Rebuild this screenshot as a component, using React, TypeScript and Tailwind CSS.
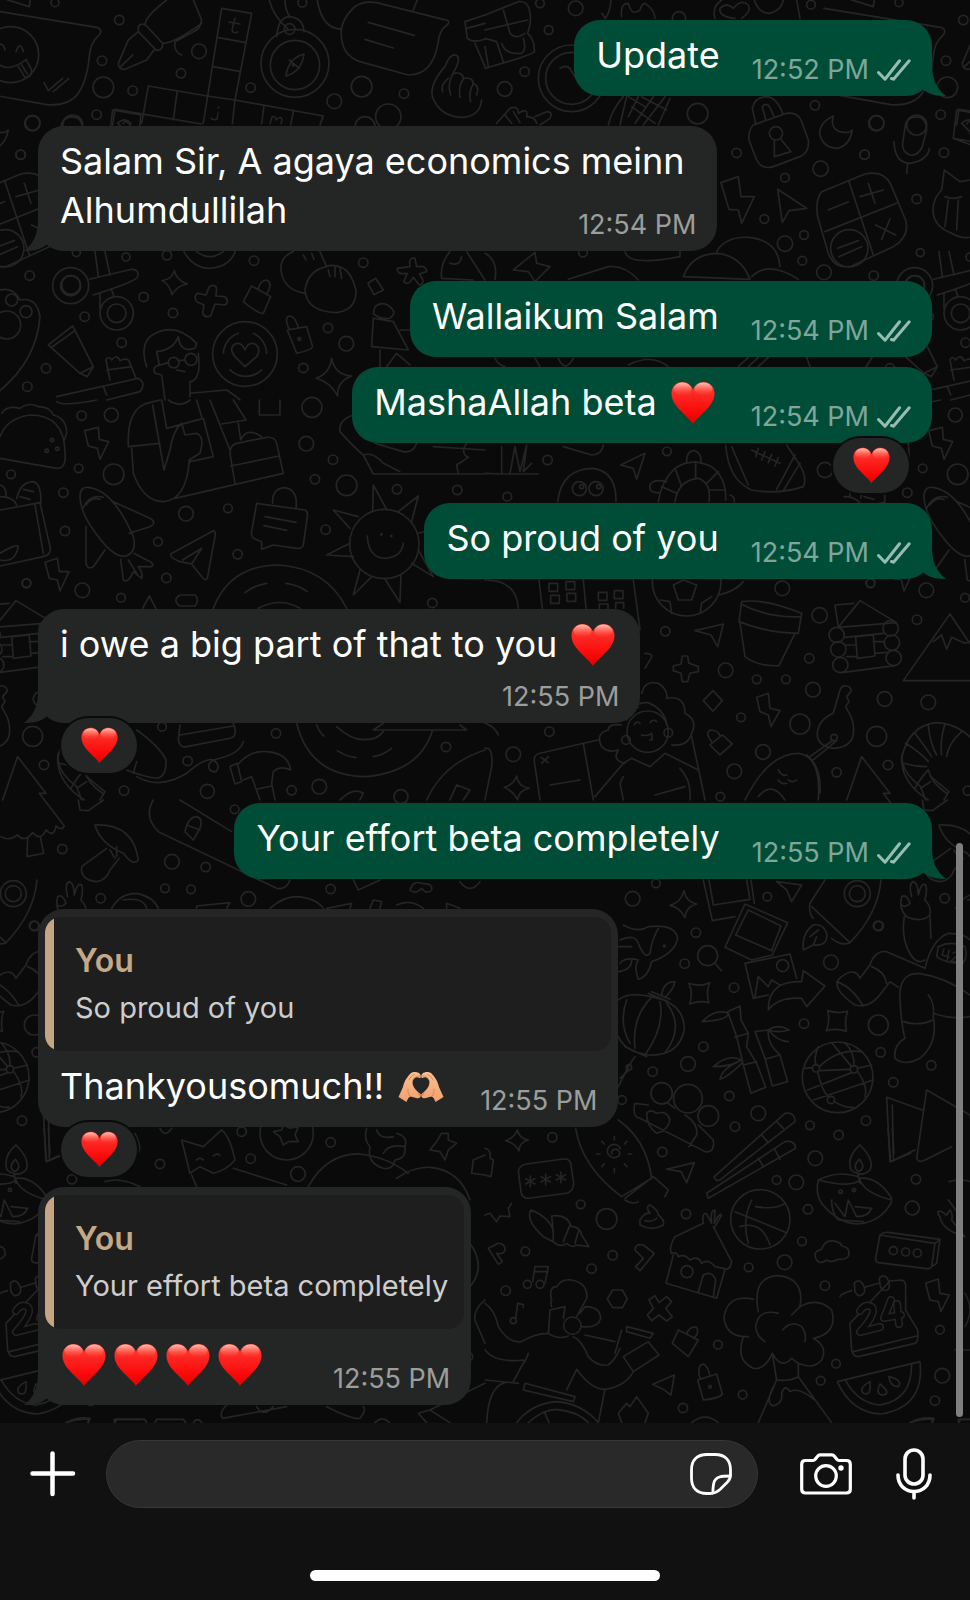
type Message = {
  id: number;
  mine: boolean;
  text: string;
  time: string;
  hearts?: number;
  hands?: boolean;
  quote?: string;
  reacted?: boolean;
  first?: boolean;
  tail?: boolean;
  stacked?: boolean;
};

// Lines of a longer message are split with \n, the last one shares its row with the time
const messages: Message[] = [
  { id: 1, mine: true, text: 'Update', time: '12:52 PM', tail: true },
  { id: 2, mine: false, text: 'Salam Sir, A agaya economics meinn\nAlhumdullilah', time: '12:54 PM', first: true, tail: true },
  { id: 3, mine: true, text: 'Wallaikum Salam', time: '12:54 PM', first: true },
  { id: 4, mine: true, text: 'MashaAllah beta', hearts: 1, time: '12:54 PM', reacted: true },
  { id: 5, mine: true, text: 'So proud of you', time: '12:54 PM', tail: true },
  { id: 6, mine: false, text: 'i owe a big part of that to you', hearts: 1, time: '12:55 PM', first: true, tail: true, reacted: true, stacked: true },
  { id: 7, mine: true, text: 'Your effort beta completely', time: '12:55 PM', first: true, tail: true },
  { id: 8, mine: false, text: 'Thankyousomuch!!', hands: true, quote: 'So proud of you', time: '12:55 PM', first: true, reacted: true },
  { id: 9, mine: false, text: '', hearts: 4, quote: 'Your effort beta completely', time: '12:55 PM', tail: true },
];

// Wallpaper doodles, drawn in patches at three times their final size
type Patch = { x: number; y: number; rings: number[][]; lines: string[] };

const patches: Patch[] = [
  {
    x: 0, y: 0,
    rings: [
      [165, 8, 12], [358, 60, 14], [597, 154, 22], [306, 182, 14], [543, 220, 14], [310, 262, 31], [398, 272, 14], [290, 344, 14],
      [98, 369, 22], [218, 375, 30], [62, 464, 14], [752, 263, 14], [907, 8, 13], [1085, 260, 31], [1212, 281, 14], [1003, 304, 22],
      [1165, 350, 38], [1095, 380, 30], [89, 827, 14], [229, 758, 12], [378, 771, 12], [431, 891, 14], [519, 939, 14], [254, 950, 14],
      [365, 1028, 14], [138, 1105, 14], [82, 1160, 14], [501, 766, 14], [762, 782, 14], [1090, 788, 14], [984, 984, 14], [1039, 1031, 22],
      [910, 1104, 14], [32, 164, 84], [885, 190, 102], [885, 195, 74], [869, 87, 16], [212, 857, 54], [212, 857, 30], [350, 940, 50],
      [350, 940, 28], [735, 1062, 97], [898, 1017, 4], [35, 900, 18], [78, 935, 18], [20, 975, 42], [521, 1088, 16], [573, 1078, 18], [880, 195, 3],
    ],
    lines: [
      'M-60 25 L0 35 L290 82 Q312 90 295 108 Q270 130 268 170 Q262 240 235 280 Q205 320 140 314 L-60 278',
      'M0 196 Q30 215 80 178 M-12 150 Q5 115 15 150 M48 155 Q60 120 70 155 M55 200 L75 232 Q95 235 95 210 L80 182 M65 195 L82 222',
      'M132 248 L145 272 L188 235 M160 275 L206 236',
      'M355 190 Q355 210 375 208 L440 180 L462 150 M355 190 L385 120 L415 95 M362 200 L398 165 M415 80 Q425 65 440 78 L488 130 Q490 150 470 152 L415 95 Z',
      'M436 72 Q435 50 500 0 M490 130 Q520 130 605 70 M580 0 L605 60 Q600 90 580 95 L525 125 Q520 155 545 165',
      'M665 25 L755 40 L705 300 L970 348 L960 375 M665 25 L610 370 M652 112 L738 128 M640 200 L722 215 M622 288 L705 300 M445 258 L622 288 M445 258 L425 370 M532 272 L520 360 M345 328 L605 372 M345 328 L338 375 M792 318 L785 372 M880 335 L872 375 M705 300 L697 372',
      'M830 110 Q835 50 870 50 Q910 55 912 95 M808 0 Q820 50 865 88 M855 0 Q855 30 870 50 M912 162 Q865 175 858 228 Q905 215 912 162 Z M868 180 L898 205',
      'M1050 35 Q1075 0 1130 8 L1330 58 Q1360 62 1335 80 Q1318 95 1315 125 Q1300 225 1225 225 L1080 185 Q1020 165 1024 90 Q1028 60 1050 35 Z M1105 67 L1243 106 M1095 118 L1180 144 M952 0 Q965 85 1025 88 M1240 30 L1252 0',
      'M1395 65 L1455 45 M1395 65 L1402 115 Q1420 130 1455 118 M1425 130 L1455 200 M1400 85 L1455 70',
      'M1362 215 Q1385 175 1368 165 Q1350 160 1335 200 Q1290 250 1297 290 Q1320 350 1385 352 Q1440 350 1445 300 M1345 235 Q1320 255 1328 275 M1362 215 Q1340 250 1352 285 M1362 220 Q1390 215 1390 238 Q1375 255 1380 292 M1390 235 Q1420 230 1420 252 Q1405 275 1412 305 M1420 250 Q1440 260 1430 285',
      'M268 838 L395 808 Q420 808 412 832 Q405 845 280 885 M285 755 L295 830 M315 755 L330 825 M300 880 L300 925 M335 870 L342 890',
      'M523 812 Q530 842 562 852 Q530 858 516 884 Q510 855 486 842 Q515 840 523 812 Z',
      'M628 860 Q645 850 650 865 L648 888 L675 890 Q690 905 675 915 L645 912 L632 948 Q615 955 608 940 L612 915 L590 905 Q580 890 592 880 L618 885 Z',
      'M755 858 L812 890 L790 940 Q780 945 730 905 Z M775 868 Q780 840 800 840 Q820 850 800 882',
      'M862 990 L920 980 L938 1040 Q935 1050 890 1060 Z M868 988 Q850 950 870 948 Q885 950 895 982',
      'M552 755 Q580 805 630 805 Q690 800 705 755 M590 755 Q630 785 670 755',
      'M880 755 Q840 770 843 810 Q850 870 915 880 M960 755 L980 800 Q925 810 915 870 Q920 935 1010 938 Q1070 930 1068 870 Q1055 820 1030 805 Q1000 790 980 800 M985 810 L990 830 M1005 800 L1005 830 M1020 805 L1025 835 M910 765 L918 780 M935 760 L942 778',
      'M1127 835 L1150 870 L1122 884 L1104 850 Z',
      'M1230 800 Q1225 770 1245 775 L1250 800 Q1280 795 1280 815 L1258 822 Q1280 850 1258 855 L1240 832 Q1225 860 1212 845 L1222 820 Q1190 825 1192 805 Z',
      'M1350 755 Q1320 790 1325 835 L1420 840 M1350 790 Q1380 800 1385 770 M1400 755 L1455 840',
      'M670 1060 A68 68 0 0 1 715 1000 M760 1000 A68 68 0 0 1 800 1060 M690 1110 A68 68 0 0 0 785 1110 M735 1100 L705 1070 Q685 1045 705 1032 Q725 1025 735 1050 Q745 1025 765 1032 Q785 1045 770 1070 Z',
      'M440 1100 Q420 1040 450 1010 Q520 960 590 1030 L585 1045 Q540 1060 535 1010 Q520 1050 470 1055 L478 1095 Q455 1100 465 1120 L485 1125 L495 1200 M595 1060 Q605 1140 570 1145 L570 1190 M535 1082 L555 1080 M530 1110 L555 1115 M505 1088 L470 1098 M570 1180 L680 1170 Q710 1190 720 1200',
      'M145 1035 L218 978 L280 1100 L240 1120 Z M155 1042 L225 992 M240 1120 L262 1130 L280 1100',
      'M330 1140 L318 1080 Q325 1065 335 1080 Q350 1060 360 1082 Q385 1070 390 1090 L408 1135 M170 1190 L415 1135 Q440 1150 420 1175 L320 1200 M320 1110 L395 1100 M310 1160 L320 1185',
      'M995 1075 Q1005 1125 1055 1128 Q1010 1145 1013 1188 Q990 1145 948 1135 Q990 1120 995 1075 Z',
      'M1120 955 L1115 1040 L1225 1050 L1180 965 Z M1125 920 Q1150 900 1175 925 Q1190 940 1170 955 Q1140 960 1120 940 Z M1140 1050 L1140 1100 M1160 1100 L1190 1060 L1230 1095 M1200 990 L1230 990',
      'M0 870 Q40 860 60 900 Q110 890 120 950 Q110 1080 0 1172',
    ],
  },
  {
    x: 485, y: 0,
    rings: [
      [165, 10, 13], [272, 25, 22], [191, 90, 13], [119, 215, 14], [59, 267, 22], [582, 55, 20], [978, 14, 13], [638, 341, 31],
      [990, 316, 14], [1174, 370, 23], [755, 459, 14], [1139, 464, 14], [1007, 506, 23], [900, 533, 13], [838, 657, 13], [957, 705, 13],
      [900, 731, 23], [952, 782, 13], [1017, 817, 22], [294, 758, 13], [1377, 458, 14], [1295, 597, 14], [260, 235, 100], [260, 235, 78],
      [873, 400, 20], [1093, 745, 56], [1290, 855, 28],
    ],
    lines: [
      'M0 45 L100 5 Q130 0 135 40 Q140 65 128 100 Q150 120 148 155 Q140 165 0 205 M55 30 L75 100 M0 90 L128 60 M75 100 Q90 120 120 100 M0 115 L35 125 L55 185 M50 130 Q60 165 110 160 Q125 150 115 115 M0 140 L10 200',
      'M225 205 Q250 190 260 215 L285 255',
      'M35 370 L75 325 Q100 315 100 340 Q130 320 125 350 Q150 350 155 370 M150 350 L185 335 Q205 335 195 355 L165 375 M60 345 L80 370 M85 335 L105 368',
      'M410 50 Q405 10 430 10 Q440 50 465 30 Q470 10 480 10 Q510 30 510 55 M378 0 Q375 40 360 55 M350 40 L362 55',
      'M690 55 Q680 20 710 0 M935 0 L945 55 M750 55 Q700 50 705 25 Q725 5 745 25 Q770 -5 790 15 Q800 35 770 55 M808 0 Q820 40 855 40 Q890 30 895 0 M1100 0 L1165 20 L1168 0',
      'M415 290 Q380 330 370 375 M425 290 L405 375 M430 290 L480 320 M470 290 L545 330 M555 295 L520 375 M505 290 L450 370 M540 290 L475 375 M440 320 L510 370 M460 290 L430 350',
      'M805 375 L905 340 Q940 335 950 365 L970 420 Q975 455 945 470 L865 500 Q830 510 815 480 L792 420 Q790 390 805 375 Z M812 370 L802 325 Q810 290 845 290 Q875 292 893 340 M842 358 L832 320 Q845 305 855 322 L867 350 M868 420 L868 470 L918 455 L888 418',
      'M1045 348 Q1000 370 1005 405 Q1015 445 1060 445 Q1095 435 1102 390 Q1092 402 1065 395 Q1035 385 1045 348 Z',
      'M1262 370 Q1275 345 1305 352 Q1325 360 1325 390 L1312 440 Q1300 468 1275 465 Q1250 455 1253 430 Z M1227 425 Q1230 490 1275 490 Q1330 480 1333 445 M1268 492 L1265 520',
      'M708 548 L760 530 L768 590 L808 590 L770 670 L760 630 L732 628 Z M878 568 L965 625 L912 632 L892 668 Z',
      'M1010 575 L1140 522 Q1200 510 1220 560 L1262 660 Q1275 710 1225 740 L1100 798 Q1050 810 1030 760 L998 650 Q990 600 1010 575 Z M1092 545 L1165 765 M1020 695 L1235 610 M1030 630 L1090 605 M1125 590 L1195 570 M1150 550 L1170 610 M1172 675 L1232 705 M1215 657 L1190 718 M1058 745 L1120 722 M1062 770 L1130 740',
      'M1345 640 Q1340 600 1370 570 L1378 510 L1425 545 L1455 540 L1500 510 L1510 580 Q1540 640 1500 690 Q1450 730 1400 700 Q1350 680 1345 640 Z M1380 590 Q1405 600 1430 590 M1390 600 L1380 680 M1420 600 L1415 690 M1460 590 Q1480 600 1500 590',
      'M1405 415 L1415 330 L1500 345 L1490 430 Z M1430 370 Q1450 350 1470 370 L1460 400 Z M1455 400 Q1500 430 1480 440 Q1440 430 1405 415',
      'M595 830 Q620 760 700 760 Q770 770 795 838 Z M695 755 Q720 710 790 712 Q880 720 885 800 M800 830 Q850 780 940 838',
      'M85 810 L150 757 L155 790 L195 800 L150 845 L130 815 Z M250 838 L370 800 Q420 795 460 840 M420 755 Q430 800 585 770 L585 755 M0 760 Q40 780 30 838',
      'M30 1075 Q40 1095 60 1100 M150 1075 L165 1100 M430 1095 Q500 1060 550 1100 M760 1100 L790 1072 M790 1100 L820 1072 M820 1100 L850 1072 M965 1072 L975 1100 M220 1075 Q240 1120 265 1075',
    ],
  },
  {
    x: 0, y: 400,
    rings: [
      [245, 47, 14], [334, 45, 21], [936, 22, 30], [236, 205, 13], [341, 223, 31], [919, 131, 22], [999, 179, 14], [945, 238, 14],
      [1040, 256, 31], [33, 223, 13], [190, 278, 14], [558, 341, 22], [684, 325, 13], [1191, 268, 14], [1372, 270, 14], [195, 393, 14],
      [474, 425, 13], [977, 389, 14], [713, 463, 14], [499, 534, 14], [80, 549, 13], [247, 571, 22], [363, 593, 13], [1297, 609, 14],
      [98, 1009, 30], [132, 1095, 14], [563, 1083, 14], [372, 1172, 14], [622, 1174, 21], [828, 1000, 14], [875, 1171, 14], [958, 1160, 22],
      [1338, 1041, 14], [1203, 1190, 21], [486, 980, 13], [1153, 432, 104], [156, 120, 5], [140, 152, 5], [172, 146, 5], [1144, 403, 2], [1174, 408, 2],
    ],
    lines: [
      'M0 175 L170 205 Q200 205 195 160 Q195 45 90 45 Q20 55 0 110 M5 40 Q20 15 60 25 Q90 5 115 20 Q150 20 160 45 Q200 55 200 100 L193 120',
      'M254 92 L295 82 L298 118 L326 125 L300 178 L292 145 L265 138 Z M135 487 L172 475 L178 515 L207 515 L180 573 L172 540 L148 535 Z',
      'M385 140 Q380 30 440 10 L480 0 M385 140 L480 130 M395 145 L400 220 Q430 305 490 305 Q560 300 568 180 L600 160 Q615 110 590 100 L555 105 L545 70 Q520 90 510 150 L492 210 L458 15 M485 0 L500 85 L610 55 L640 170 L570 185 M590 0 L605 50 M525 295 L850 220 L830 130 Q825 110 800 112 L710 130 Q690 135 690 160 L705 250 M630 0 L690 150 M700 0 L738 60 L665 72 M715 70 L722 120 Q740 80 785 110 M692 198 L838 168 M505 0 Q540 25 570 0',
      'M778 0 V45 H840 V0 M170 5 Q190 20 290 0',
      'M240 290 Q240 260 265 262 Q340 270 400 410 Q410 450 385 465 Q360 480 320 440 Q240 350 240 290 Z M248 325 Q270 280 310 292 M258 315 Q275 290 300 298 M340 305 L450 355 Q475 370 445 382 L388 400 M258 380 L258 490 Q262 510 280 500 L315 450 M362 478 L370 540 Q385 550 400 515 L425 535 Q430 520 415 500 L455 500 Q465 490 440 480 L402 460 M385 480 L410 520',
      'M512 462 L640 392 Q648 395 645 410 L622 535 Q615 545 605 530 L575 492 L540 485 Q510 475 512 462 Z M575 492 L605 445 M548 480 L605 445',
      'M770 310 L915 330 Q925 335 922 350 L910 435 Q905 448 890 445 L820 435 L785 448 L785 425 L760 415 Q752 405 755 395 Z M795 350 L888 367 M792 377 L860 391 M818 310 Q815 265 855 263 Q895 270 888 325',
      'M1118 335 L1120 255 L1160 328 M1195 335 L1255 288 L1235 365 M1075 350 L1000 330 L1050 385 M1050 430 L980 465 L1060 470 M1080 510 L1060 585 L1115 530 M1155 537 L1200 608 L1203 525 M1235 490 L1300 530 L1255 450 M1255 400 L1290 390 M1102 408 Q1105 475 1158 475 Q1205 470 1210 430',
      'M640 625 Q690 495 838 495 Q980 505 1040 625 M735 578 Q765 555 800 550 M858 550 Q895 555 922 575 M775 625 Q840 590 900 625',
      'M540 585 H585 Q600 600 585 618 H540 Q515 600 540 585 Z M428 625 L448 588 L468 625',
      'M0 330 L120 308 L150 440 Q155 465 130 470 L0 498 M105 315 L130 460 M50 295 Q60 250 95 245 Q125 245 122 310 M0 255 Q20 260 18 290 M0 290 Q40 290 50 315 M0 460 Q50 430 55 440 Q45 490 0 480 M60 290 L90 298 M70 268 L100 275',
      'M1060 45 Q1015 60 1020 95 Q1060 140 1090 165 L1120 222 H1455 M1090 165 Q1120 155 1150 190 L1200 215 M1125 130 L1210 155 Q1240 160 1250 130 M1300 140 L1455 150 M1400 130 Q1380 160 1405 172 L1370 195 L1375 222',
      'M540 975 L535 1020 Q540 1045 560 1040 L690 1015 Q710 1010 705 985 L700 970 M540 1005 L700 978',
      'M410 1130 Q480 1170 560 1120 Q640 1050 655 1100 Q650 1125 630 1110 Q615 1085 660 1075 Q720 1060 730 1025 M410 990 Q480 1040 498 1080 Q500 1130 470 1135 Q430 1130 380 1110 M410 1085 L400 1120',
      'M690 1100 L712 1090 L725 1145 L705 1152 Z M712 1095 Q750 1050 800 1055 Q865 1060 872 1110 Q840 1095 820 1115 L815 1150 L825 1200 M730 1140 L755 1130 L780 1200 M770 1168 L815 1158',
      'M890 970 Q930 1130 1100 1130 Q1260 1115 1298 990 M950 975 Q960 1000 972 1008 M1012 1052 Q1040 1070 1068 1073 M1120 1070 Q1150 1065 1175 1045 M1010 980 Q1060 1025 1100 1018 Q1130 1020 1150 995 M1120 990 H1400 L1380 975 M1120 990 L1150 970',
      'M1455 1050 Q1330 1090 1280 1200 M1350 1200 L1370 1155 L1410 1170 L1390 1200 M175 1060 Q165 1110 230 1160 L245 1200 M260 1130 L315 1175 L300 1200 M230 1165 L260 1145 M1020 1200 Q1060 1160 1090 1180 L1080 1200',
    ],
  },
  {
    x: 485, y: 400,
    rings: [
      [546, 154, 13], [188, 180, 14], [67, 290, 13], [1020, 210, 23], [892, 565, 22], [1004, 646, 23], [1156, 550, 13], [541, 694, 14],
      [973, 775, 14], [722, 811, 22], [815, 838, 13], [903, 838, 13], [1296, 659, 14], [984, 869, 22], [1199, 897, 22], [1330, 907, 22],
      [768, 952, 13], [945, 972, 30], [193, 995, 14], [85, 1063, 22], [834, 1056, 22], [748, 1114, 22], [1055, 1117, 14], [706, 1190, 13],
      [283, 266, 21], [333, 266, 21], [290, 260, 6], [341, 260, 6], [605, 545, 103], [1055, 705, 23], [1060, 748, 23], [1066, 795, 23],
      [1217, 685, 23], [1221, 728, 23], [1226, 774, 23], [1047, 1013, 10], [488, 995, 62], [423, 1020, 13], [550, 998, 13],
    ],
    lines: [
      'M218 305 Q230 205 325 205 Q395 215 393 305 M480 160 L455 238 L445 205 L407 195 Z',
      'M520 305 Q530 240 570 205 Q620 170 680 200 Q725 235 722 300 M570 305 Q580 240 640 235 Q680 250 672 305 M605 185 Q605 150 630 152 Q650 160 648 188 M522 278 Q490 280 495 255 Q505 235 545 245 M735 285 Q750 290 748 305 M570 205 L590 260 M632 185 V235 M700 215 L665 250 M722 270 L675 270 M530 260 L575 280',
      'M722 135 Q730 240 800 270 Q880 285 955 260 Q970 230 935 180 L905 135 M740 140 L790 255 M875 268 L930 165 M895 272 L945 190 M800 150 L885 190 M820 145 L812 170 M840 155 L830 180 M860 163 L850 188 M880 173 L870 198',
      'M50 140 V220 M0 220 L50 222 H160 M75 220 L90 140 L105 215 L125 135 L115 215 L140 190 M235 140 L320 165 Q350 165 355 135',
      'M162 540 L172 625 M295 540 L303 625 M445 540 L465 690 M0 540 Q95 540 100 625 M192 550 h26 v24 h-26 Z M243 545 h26 v24 h-26 Z M197 586 h26 v24 h-26 Z M246 580 h26 v24 h-26 Z M340 577 h26 v24 h-26 Z M388 572 h26 v24 h-26 Z M343 625 V612 H369 V625 M392 625 V608 H416 V625',
      'M565 555 L595 540 L635 555 L620 600 L580 600 Z M525 600 L555 605 L560 640 M680 590 L650 610 L645 640 M700 585 Q750 575 775 545 M480 760 Q510 760 495 780 L480 805',
      'M770 605 Q840 595 950 640 L940 700 Q850 700 762 665 Z M768 612 Q850 655 948 650 M765 668 L780 770 Q820 800 882 797 L930 700',
      'M630 692 L715 672 L698 740 L678 705 Z M592 768 L608 768 L612 790 L640 800 L640 815 L615 820 L608 845 L592 845 L588 820 L565 812 L565 798 L588 792 Z M684 872 L712 902 L684 934 L655 902 Z M815 892 L850 880 L855 925 L885 932 L858 980 L850 945 L825 935 Z M675 1035 L712 1005 L742 1032 L705 1065 Z M680 1025 Q660 1000 675 990 Q700 990 705 1008',
      'M1060 682 L1125 602 L1235 668 Z M1050 615 L1105 610 M1050 615 L1060 680 M1112 710 L1165 705 L1170 768 L1117 775 Z M1080 712 L1195 700 M1082 735 H1112 M1165 725 H1198 M1085 770 H1117 M1170 760 L1205 757 M1070 818 L1230 797',
      'M1600 842 H1255 L1395 642 L1530 842 M1345 725 L1370 705 L1385 748 L1400 712 L1440 730 L1455 725',
      'M1065 870 Q1070 855 1085 858 Q1100 860 1098 875 L1085 890 L1092 905 L1082 920 L1090 935 Q1110 965 1105 1005 Q1095 1045 1040 1045 Q995 1035 997 1000 Q1000 960 1045 940 Z M1045 1020 L975 1070 M1055 1022 L985 1080',
      'M425 960 Q440 905 490 908 Q540 930 545 975 M470 880 Q480 840 520 850 Q550 870 545 895 Q600 885 600 940 Q640 960 620 1000 Q610 1040 560 1035 M410 975 Q370 970 370 990 Q330 1000 350 1040 Q370 1060 400 1050 Q380 1080 420 1090 M425 940 Q440 925 460 922',
      'M415 1090 L440 1075 L495 1100 L540 1060 L640 1110 M620 1010 L660 1200 M415 1200 L405 1150 L415 1130 M415 1090 L330 1190 M585 1105 Q620 1140 615 1200 M510 1185 L600 1160 M470 1005 Q490 1010 500 1000 Q505 1025 495 1020 M448 975 Q455 960 465 970 M495 968 Q505 955 515 965',
      'M325 1200 L295 1030 L340 1020 M295 1030 L165 1060 Q145 1065 148 1085 L165 1200 M195 1155 L285 1140 M168 1072 L190 1088 M190 1070 L170 1090',
      'M95 1128 Q98 1158 132 1165 Q100 1172 98 1200 Q85 1175 58 1162 Q85 1155 95 1128 Z M0 1045 Q25 1040 20 1100 L0 1200 M0 970 Q30 980 40 1005',
      'M780 1200 Q850 1060 940 1060 Q1010 1070 1000 1200 M880 1110 Q890 1130 905 1125 M910 1140 Q920 1150 935 1140 M880 1140 Q890 1155 905 1150 M820 1190 Q860 1140 900 1200 M965 1065 Q1010 1100 1005 1180',
      'M1085 1200 L1130 1070 L1215 1180 L1195 1180 L1270 1278 Q1262 1295 1245 1278 Q1240 1315 1215 1290 Q1200 1325 1175 1298 Q1150 1330 1130 1305 Q1105 1325 1080 1310 M1160 1315 L1158 1370 L1208 1360 L1198 1310',
      'M1330 1200 Q1250 1150 1250 1075 Q1270 980 1350 968 Q1430 970 1480 1040 M1262 1030 Q1310 1060 1330 1085 M1290 1000 Q1320 1040 1340 1070 M1330 975 Q1335 1030 1355 1065 M1380 972 Q1365 1020 1370 1065 M1430 995 Q1390 1030 1385 1070 M1255 1090 Q1290 1100 1325 1100 M1290 1165 Q1310 1130 1330 1110 Q1340 1150 1385 1180',
    ],
  },
  {
    x: 0, y: 800,
    rings: [
      [187, 147, 14], [516, 185, 22], [617, 201, 14], [495, 265, 13], [573, 268, 13], [302, 295, 14], [745, 297, 22], [992, 267, 14],
      [704, 28, 13], [104, 378, 14], [480, 1092, 14], [725, 995, 14], [752, 1076, 14], [992, 1027, 14], [894, 1122, 22], [860, 1000, 80],
    ],
    lines: [
      'M285 75 Q400 70 415 180 Q400 200 370 160 Q300 130 285 75 Z M320 145 L245 200 Q240 240 290 245 Q320 240 330 210 L358 175 M330 150 L345 175 M350 140 L350 170',
      'M540 0 L695 95 M460 0 Q430 50 475 95 L830 265 Q860 270 870 240 M555 95 Q565 50 590 50 Q610 55 600 85 L580 120 Z M560 75 L600 90 M235 0 L240 30 L265 32 L310 0',
      'M335 325 Q360 280 410 280 Q460 290 475 325 M370 300 Q430 290 440 325 M590 325 L590 318 L690 308 L680 325 M810 325 Q850 290 890 290 Q950 295 970 325 M1060 240 L1075 270 L1140 240 M1230 270 Q1240 240 1265 250 Q1300 250 1295 270 Q1280 285 1265 265 Q1245 285 1230 270 M1110 325 L1120 300 L1145 305 L1140 325 M1190 315 Q1230 295 1270 325 M1340 325 L1340 310 L1380 325 M1380 245 Q1410 285 1440 245 M980 325 L1055 310 L1050 325',
      'M570 1120 L545 1020 L610 1040 L665 990 Q690 1010 705 1080 Q680 1110 640 1120 L600 1100 Z M590 1080 Q600 1070 610 1080 M640 1068 Q650 1058 660 1066 M575 1125 L590 1160 M700 1105 L860 1155',
      'M850 975 L870 985 L895 980 L885 1005 L895 1025 L865 1025 L850 1035 L840 1010 L820 995 L845 990 Z',
      'M1100 985 Q1090 1020 1110 1040 Q1100 1090 1150 1105 Q1180 1110 1185 1080 Q1220 1075 1215 1040 Q1225 1010 1190 1000 M1150 1060 Q1165 1030 1215 1040 M1130 990 Q1140 1020 1180 1010 M925 1160 Q980 1060 1080 1062 Q1160 1070 1225 1120 M1190 1135 Q1240 1100 1290 1102 Q1380 1110 1410 1200',
      'M1310 1025 L1290 1050 L1320 1055 L1335 1080 L1345 1050 L1370 1030 L1345 1020 L1345 1000 L1325 1000 Z M1420 1080 L1455 1065 M1420 1080 L1415 1120 L1455 1125',
      'M132 985 L140 1085 L200 1060 M145 985 L150 1060 M315 1145 Q360 1130 420 1160 M405 1000 Q430 1050 410 1060 M480 985 Q495 1015 515 985',
    ],
  },
  {
    x: 485, y: 800,
    rings: [
      [443, 296, 22], [513, 250, 13], [847, 290, 13], [633, 398, 14], [599, 491, 14], [1038, 487, 22], [747, 563, 14], [957, 671, 14],
      [1179, 377, 14], [1180, 675, 30], [655, 740, 14], [609, 792, 22], [503, 815, 14], [1187, 757, 14], [1339, 796, 14], [1225, 847, 14],
      [733, 888, 14], [820, 940, 22], [750, 980, 14], [411, 900, 13], [975, 976, 13], [1143, 962, 14], [1061, 1005, 14], [202, 1012, 14],
      [532, 1056, 14], [991, 1075, 22], [875, 1140, 13], [934, 1147, 22], [1293, 1138, 14], [668, 467, 30], [893, 497, 18], [1117, 281, 39],
      [1117, 281, 24], [1058, 832, 106], [993, 805, 11], [1107, 808, 11], [1038, 900, 11], [530, 880, 32], [609, 896, 43], [670, 948, 31],
      [538, 438, 3], [432, 802, 8], [1067, 1175, 5], [1107, 1170, 5],
    ],
    lines: [
      'M690 490 L710 513 M597 272 Q602 305 635 312 Q602 320 600 353 Q585 322 555 316 Q588 308 597 272 Z M612 550 Q645 562 674 548 Q662 578 672 608 Q645 600 614 612 Q625 580 612 550 Z M1028 632 Q1058 642 1088 634 Q1078 662 1084 694 Q1056 684 1024 692 Q1036 662 1028 632 Z',
      'M655 240 L682 362 L750 350 M672 240 L685 315 L795 298 L785 240 M798 240 L808 310 M780 312 L908 368 L862 465 L800 480 L720 442 Z M790 330 L888 378 L860 452 L752 405 Z M780 490 L915 462 L935 535 M780 490 L805 595 L850 585 M810 590 L820 530 L850 560 L860 540 L885 555',
      'M850 630 Q850 540 950 545 L955 512 L1020 558 L965 620 L950 595 Q880 590 850 630 Z M875 245 L950 255 L920 305 L905 270 Z',
      'M1020 240 L975 310 Q970 340 985 355 M980 320 L1095 428 Q1180 340 1188 240 M1095 428 Q1070 440 1040 415 M985 375 Q950 400 955 450 L985 435 Q1030 440 1025 400 Q1015 370 985 375 Z M975 410 L1000 390 M985 435 L995 410',
      'M1280 290 Q1270 250 1285 245 Q1300 250 1300 285 Q1310 245 1322 255 Q1328 270 1320 300 Q1340 320 1335 345 Q1310 370 1265 350 Q1240 325 1250 290 Q1265 280 1275 310 Q1260 325 1250 315 M1258 350 Q1250 400 1265 440 Q1290 500 1320 480 M1335 350 L1338 415',
      'M1320 505 L1205 455 Q1170 450 1155 495 L1125 535 Q1110 500 1070 530 Q1030 560 1110 615 Q1150 625 1180 590 L1215 545 L1240 562 M1160 500 Q1200 515 1205 550 M1055 545 Q1100 560 1135 618 M1245 600 Q1240 520 1300 520 Q1380 530 1455 585 M1245 600 Q1250 680 1260 715 Q1225 735 1230 775 Q1260 800 1305 775 Q1360 730 1345 650 Q1350 610 1330 585 M1255 665 Q1300 680 1345 660 M1345 640 Q1400 660 1455 650 M1320 505 Q1340 420 1390 400 Q1440 400 1455 420 M1360 440 Q1400 420 1440 440 Q1450 480 1430 490 Q1380 490 1355 470 Z',
      'M415 375 Q460 400 490 380 Q570 370 578 415 Q570 460 500 485 Q490 530 460 538 Q445 500 460 480 Q420 470 405 490 M405 420 Q450 400 460 430 Q480 480 495 460 Q500 420 520 385 M400 440 H440 M400 515 Q440 510 440 480',
      'M400 600 Q430 575 500 590 Q600 610 598 690 Q580 770 490 765 Q420 755 400 710 M490 580 L550 605 M500 575 L555 598 M500 592 Q440 650 450 745 M525 605 Q540 680 480 765 M545 610 Q600 680 540 758 M425 600 Q400 670 435 730 M420 740 L485 770 M530 585 Q535 545 570 545 Q565 570 540 592 M450 770 L430 800 L400 860 M432 810 L405 835',
      'M728 635 L765 618 L768 660 L790 700 L785 740 L815 790 L842 862 L798 880 L775 795 L755 710 Z M750 712 L790 700 M775 795 L815 785 M652 665 Q690 625 730 640 Q730 660 652 665 Z M810 695 L850 690 Q845 730 885 765 L908 845 L862 858 L840 775 Z M840 778 L885 765 M850 690 Q880 670 912 690 Q880 700 850 690 Q880 725 910 725 M685 800 Q730 760 768 780 Q740 800 685 800 M770 790 Q730 830 705 838 Q710 810 750 790',
      'M1000 740 Q985 775 993 795 M998 815 Q1010 870 1030 892 M1048 905 Q1080 925 1105 922 M1003 800 Q1060 745 1130 755 M1080 728 Q1110 760 1107 798 M1118 815 Q1150 860 1140 890 M960 805 L983 803 M1004 812 L1096 808 M968 870 L1100 818 M1118 805 L1160 795 M985 900 L1165 840 M1040 728 L1100 800',
      'M450 910 Q440 950 465 955 L660 1055 Q690 1060 685 1020 L640 975 M450 910 L490 915 M550 910 L570 925 M600 945 Q640 970 635 1005 L612 1040 M485 940 Q495 925 515 940 Q545 930 555 960 Q550 990 515 1000 Q485 980 485 940 Z',
      'M688 1130 L900 940 Q930 935 930 965 L705 1140 Q690 1145 688 1130 Z M665 1180 L900 1025 Q930 1020 932 1045 L670 1195 Z M875 965 L895 985 M830 1005 L850 1028 M870 1050 L885 1078 M820 1075 L835 1100',
      'M1205 892 L1215 1085 L1290 1050 M1205 892 L1312 930 M1222 915 L1225 1075 M1325 870 L1295 1075 Q1300 1090 1320 1080 L1400 1040 M1325 870 L1455 945 L1475 1080',
      'M1125 1035 Q1085 1070 1098 1110 Q1130 1135 1155 1110 Q1170 1080 1125 1035 Z M1123 1078 Q1100 1100 1120 1115 Q1145 1105 1123 1078 M1120 1125 L1125 1150 M1125 1135 Q1180 1130 1220 1195 M1000 1140 Q1060 1110 1120 1130 M1000 1140 Q990 1180 1010 1210 Q1060 1272 1120 1272 Q1190 1265 1220 1205 M1000 1140 Q1100 1165 1125 1140 Q1140 1180 1220 1200',
      'M272 985 Q290 1100 410 1190 L500 1135 Q485 1020 400 960 M420 1195 L505 1130 L550 1170 L540 1190 M388 1062 m-8 0 a12 12 0 1 1 18 8 a20 20 0 1 1 8 -24 M388 1020 V1010 M388 1105 V1118 M345 1062 H335 M430 1062 H440 M358 1032 L350 1024 M418 1032 L426 1024 M358 1092 L350 1100 M418 1092 L426 1100',
      'M125 1092 L235 1077 Q255 1075 258 1095 L266 1150 Q265 1175 245 1180 L130 1195 Q110 1195 108 1175 L100 1115 Q102 1095 125 1092 Z M136 1128 V1160 M122 1136 L150 1152 M150 1136 L122 1152 M182 1122 V1154 M168 1130 L196 1146 M196 1130 L168 1146 M228 1116 V1148 M214 1124 L242 1140 M242 1124 L214 1140',
      'M97 990 Q102 1015 130 1020 Q102 1028 102 1053 Q90 1030 62 1022 Q90 1012 97 990 Z M545 1108 L628 1088 L605 1148 L588 1115 Z M0 1045 Q20 1050 15 1075 L25 1080 L18 1130 L0 1125',
    ],
  },
  {
    x: 0, y: 1200,
    rings: [],
    lines: [
      'M680 615 Q655 640 668 655 L860 620 M980 620 Q1060 660 1080 655 Q1100 630 1090 620 M770 620 Q790 655 820 620 M1255 640 L1290 630 L1350 668 M1255 640 L1280 668 M1290 630 L1455 550 M200 668 Q230 650 270 655 L265 670 M345 668 L350 658 H435 L440 670 M465 668 L470 658 H550 L558 670 M580 668 Q592 650 606 668 M1125 668 Q1147 645 1168 668 M1410 130 Q1460 200 1410 260 M1455 300 Q1420 330 1425 360 L1455 430',
    ],
  },
  {
    x: 485, y: 1200,
    rings: [
      [287, 13, 13], [365, 57, 31], [603, 42, 14], [969, 28, 14], [1282, 24, 21], [951, 124, 13], [121, 154, 13], [383, 166, 14],
      [320, 206, 14], [899, 187, 22], [791, 202, 13], [62, 272, 14], [1020, 257, 14], [1365, 389, 13], [699, 434, 13], [1053, 491, 13],
      [1007, 542, 13], [1372, 527, 22], [773, 584, 13], [594, 624, 14], [1350, 602, 14], [606, 215, 18], [826, 58, 89], [1225, 152, 12],
      [1262, 156, 12], [1297, 159, 12], [127, 253, 12], [165, 253, 12], [85, 362, 9], [262, 377, 26], [675, 560, 4], [-50, 470, 13],
    ],
    lines: [
      'M0 45 L15 40 L35 65 L45 48 L75 50 L70 25 L80 10 M138 30 Q120 60 175 110 L205 125 Q225 145 245 130 Q260 145 275 135 L312 140 L290 105 Q285 80 260 80 Q245 40 200 48 Q205 90 205 120 M138 30 Q190 50 205 90 M255 75 L235 125 M280 95 L270 130',
      'M465 60 Q480 35 495 40 Q480 20 495 15 Q520 30 520 45 Q540 60 535 75 Q500 95 465 75 Z M480 62 Q500 68 515 55 M420 0 Q440 15 460 5',
      'M570 110 L655 70 M685 80 L740 185 Q735 215 715 205 M570 110 Q550 145 560 160 Q575 155 580 170 Q600 160 615 180 Q640 165 650 190 Q670 175 690 200 L715 205 M565 165 L543 250 L695 295 L720 208 M640 275 L655 225 Q680 210 692 240 L685 292 M655 70 Q650 35 665 42 L680 70 Q675 30 690 30 L688 70 Q705 35 710 45 L690 80',
      'M750 35 L905 98 M800 0 Q770 60 790 130 M765 80 Q830 60 855 135 M812 20 Q870 30 900 10',
      'M1040 0 Q1040 40 1060 60 L1135 65 M1050 10 L1080 50 L1090 0 L1115 50 Q1150 50 1160 25 L1110 20',
      'M1185 105 L1350 130 L1340 200 Q1335 208 1325 206 L1180 188 Q1170 185 1172 175 Z M1185 105 Q1195 95 1210 97 L1365 118 L1355 190 L1340 200 M1350 130 L1365 118',
      'M995 180 Q980 155 1010 148 Q1020 115 1055 125 Q1070 130 1070 138 Q1095 140 1092 165 Q1085 180 1060 178 Q1040 190 1025 180 Q1005 195 995 180 Z',
      'M820 335 Q800 230 880 227 Q960 235 945 320 Q1000 290 1040 330 Q1060 400 985 415 Q1030 440 1010 480 Q985 510 940 490 L920 475 Q890 510 862 460 Q840 510 805 505 Q750 480 775 410 Q720 405 717 350 Q730 280 805 298 M880 340 Q820 325 812 380 Q815 410 840 425 M893 390 Q920 360 950 380 Q965 400 960 425 M920 345 L945 320 M775 410 H790 M862 460 L875 540 L820 668 M940 490 L940 530 L1040 668 M875 540 Q910 545 940 530 M865 560 Q840 610 865 618 Q895 610 890 580 Q900 550 915 575 Q940 560 990 600',
      'M1065 290 Q1070 280 1100 272 M1140 262 L1180 250 M1215 243 L1250 240 Q1262 245 1262 255 L1262 330 L1298 390 Q1302 425 1290 430 L1120 470 Q1105 470 1100 450 L1095 370 Z M1105 455 L1295 408 M1108 250 Q1120 235 1132 250 Q1145 270 1135 282 Q1120 295 1110 275 Z M1183 235 Q1195 220 1207 235 Q1218 255 1210 268 Q1195 278 1186 260 Z',
      'M1057 545 L1305 485 Q1320 620 1190 642 Q1100 640 1057 545 Z M1082 542 Q1120 610 1185 615 Q1280 600 1280 495 M1155 545 Q1120 565 1135 580 Q1160 590 1155 545 Z M1185 552 Q1170 585 1195 585 Q1220 580 1185 552 Z M1212 530 Q1215 560 1240 560 Q1255 540 1212 530 Z',
      'M1322 250 L1360 237 L1365 280 L1393 285 L1368 335 L1360 305 L1335 300 Z M492 300 L510 287 L522 308 L545 290 L560 305 L542 325 L562 350 L545 363 L522 345 L500 362 L487 345 L505 325 Z M383 270 H412 L427 297 L412 323 H383 L367 297 Z M503 553 L568 525 L558 585 L535 568 Z',
      'M580 390 L640 420 L610 470 L562 430 Z M605 400 Q615 378 635 382 Q645 400 625 415 M638 540 L695 522 L712 582 Q705 595 655 600 Z M645 535 Q635 495 655 492 Q670 500 675 528',
      'M143 245 L150 200 H190 L180 250 M148 215 H188 M92 356 L98 310 L115 314 V322 M10 145 L40 130 Q60 130 60 150 Q55 165 35 160 L52 185 L40 193 Z M450 150 Q450 130 475 135 L508 160 L465 212 L452 200 L475 175 Z',
      'M200 300 Q190 260 215 260 Q230 235 260 240 Q310 250 305 295 L275 350 M200 320 Q195 310 200 300 M195 330 L190 400 Q220 420 250 408 M195 330 L240 320 L235 355 M285 340 L300 320 Q345 320 347 355 Q340 385 290 380 M0 310 Q30 330 40 380 Q70 430 110 425 Q150 400 190 400 M265 410 Q290 420 310 470 Q335 500 370 495 Q390 480 405 445 M300 405 L390 425 M410 390 L390 460 M425 380 L505 400 L495 415 L425 395 Z M490 425 L522 465 L445 515 L415 470 Z M0 450 Q30 490 120 480 L85 545 M130 460 L120 485 M0 540 L100 550 M120 550 L270 590 L265 605 L115 570 Z M245 570 L275 508 Q320 570 360 568 Q420 560 445 515 M360 568 L340 668 M95 668 Q140 610 215 605 Q290 610 340 668 M130 668 Q170 630 215 628 Q280 635 310 668 M180 640 L192 668 M5 668 Q10 560 60 548',
      'M400 640 L425 610 L435 620 L455 590 L490 640 L480 668 M400 640 L410 668 M620 668 Q660 635 700 668 M1275 668 Q1310 655 1345 658 L1340 668 M1420 668 V658 H1500',
      'M1365 50 Q1350 30 1370 35 L1385 45 L1395 30 Q1405 40 1400 60 L1440 110 M1365 50 Q1370 90 1440 110 M1390 0 L1420 40 M1440 280 Q1470 330 1440 380 M1410 450 H1500',
    ],
  },
];

function Wallpaper() {
  return (
    <svg className="absolute inset-0 h-full w-full" aria-hidden="true">
      <defs>
        <g id="doodles" fill="none" stroke="#252525" strokeWidth="5" strokeLinecap="round" strokeLinejoin="round">
          {patches.map((p, i) => (
            <g key={i} transform={`translate(${p.x} ${p.y}) scale(0.3333)`}>
              {p.rings.map(([cx, cy, r], n) => <circle key={n} cx={cx} cy={cy} r={r} />)}
              {p.lines.map((d, n) => <path key={n} d={d} />)}
            </g>
          ))}
          {/* pencilled marks on the crossword, calendar and helmet */}
          <g strokeWidth="1.500">
            <path d="M235 18 L232 30 Q233 34 238 32 M229 22 L240 24 M219 107 L218 108 M218 113 L217 119 Q213 121 211 118 M270 124 L272 117 Q276 115 276 120 Q281 115 282 120 L281 124 M123 124 Q125 119 129 124" />
            <path strokeWidth="8" d="M860 1311 Q865 1303 872 1307 Q877 1313 860 1332 L880 1327 M891 1300 L884 1318 L901 1315 M897 1304 L899 1324" />
            <path stroke="#0a0a0a" strokeWidth="5" d="M860 1311 Q865 1303 872 1307 Q877 1313 860 1332 L880 1327 M891 1300 L884 1318 L901 1315 M897 1304 L899 1324" />
            <path d="M944 949 L942 955 L949 957 M949 950 L947 961 M953 953 Q959 950 958 955 L951 961 L957 962" />
          </g>
        </g>
      </defs>
      <use href="#doodles" />
      <use href="#doodles" x="-844" />
      <use href="#doodles" x="844" />
    </svg>
  );
}

function Heart({ className }: { className: string }) {
  return (
    <svg viewBox="0 0 44 44" className={className} role="img" aria-label="❤️">
      <defs>
        <linearGradient id="heart-fill" x1="0" y1="0" x2="0" y2="1">
          <stop offset="0" stopColor="#ff4a3d" />
          <stop offset="0.35" stopColor="#fc2420" />
          <stop offset="0.7" stopColor="#fb0a0a" />
          <stop offset="1" stopColor="#e30000" />
        </linearGradient>
        <linearGradient id="heart-shine" x1="0" y1="0" x2="0" y2="1">
          <stop offset="0" stopColor="#ffc9bf" stopOpacity="0.95" />
          <stop offset="1" stopColor="#ff5a4a" stopOpacity="0" />
        </linearGradient>
      </defs>
      <path d="M22 43 C20 39.500 13 33.500 7 27 C3 22 0.5 18 0.5 12.500 C0.5 5.500 5.500 1 11.500 1 C16.500 1 20 4 22 8.500 C24 4 27.500 1 32.500 1 C38.500 1 43.500 5.500 43.500 12.500 C43.500 18 41 22 37 27 C31 33.500 24 39.500 22 43 Z" fill="url(#heart-fill)" />
      <ellipse cx="11.500" cy="8" rx="9" ry="6.500" fill="url(#heart-shine)" />
      <ellipse cx="32.500" cy="8" rx="9" ry="6.500" fill="url(#heart-shine)" />
    </svg>
  );
}

function HeartHands() {
  return (
    <svg viewBox="0 0 46 32" className="h-8 w-[46px] shrink-0" role="img" aria-label="🫶🏼">
      <defs>
        <linearGradient id="skin" x1="0" y1="0" x2="0" y2="1">
          <stop offset="0" stopColor="#fbc096" />
          <stop offset="1" stopColor="#f2a06c" />
        </linearGradient>
        <g id="hand">
          <path d="M0.5 26 L5 16 C6 10.500 9.500 5.500 12.500 2.500 C14.500 0.500 19 0.500 21.500 2.500 C23 4 23.200 6 22 7.200 C19.500 5.500 16.500 6 15 9 C13.500 13 16 17.500 19.500 20.500 C21 21.800 22 22.500 22.800 23.500 C23 26 21.500 27.800 19 27.200 L12.500 25.500 C10.500 26 9.500 28.500 8.500 31 Z" fill="url(#skin)" />
          <path d="M15 9 C16 6 18.500 4.500 21.800 5 M12.500 25.500 C10 23.500 9.500 20.500 10 18 M11 9 C12 6.500 14 4.500 16.500 3.500 M19.500 20.500 C20.500 22 20.500 24 22 25" fill="none" stroke="#d27a45" strokeWidth="0.8" strokeLinecap="round" />
        </g>
      </defs>
      <use href="#hand" />
      <use href="#hand" transform="translate(46 0) scale(-1 1)" />
    </svg>
  );
}

function Ticks() {
  return (
    <svg viewBox="0 0 34 22" className="h-[22px] w-[34px]" fill="none" stroke="#97bdb0" strokeWidth="3" strokeLinecap="round" strokeLinejoin="round" role="img" aria-label="Delivered">
      <path d="M1.500 13.500 L8 20.200 L22.500 1.800" />
      <path d="M14.500 19.500 L16.500 20.200 L32.200 1.800" />
    </svg>
  );
}

function Tail({ mine }: { mine: boolean }) {
  return (
    <svg
      viewBox="0 0 28 32"
      className={`absolute bottom-0 h-8 w-7 ${mine ? '-right-3.5' : '-left-3.5 -scale-x-100'}`}
      fill={mine ? '#004d37' : '#242626'}
      aria-hidden="true"
    >
      <path d="M0 0 H14 C14 15 18 24 28 32 C20 32.200 12 31 6 26 L0 22 Z" />
    </svg>
  );
}

function Bubble({ m }: { m: Message }) {
  const lines = m.text ? m.text.split('\n') : [];
  const lead = lines.slice(0, -1);
  const last = lines[lines.length - 1];

  const time = (
    <div className={`flex items-center gap-2 text-[27px] leading-8 whitespace-nowrap ${m.mine ? 'text-[#80a69b]' : 'text-[#9c9d9d]'}`}>
      <time>{m.time}</time>
      {m.mine && <Ticks />}
    </div>
  );

  const body = (
    <div className="flex items-center gap-3">
      {last && <p className="text-4xl leading-[49px] whitespace-nowrap">{last}</p>}
      {(m.hearts || m.hands) && (
        <div className="flex h-[49px] items-center gap-2 pl-0.5 pr-1">
          {Array.from({ length: m.hearts ?? 0 }, (_, i) => <Heart key={i} className="size-11" />)}
          {m.hands && <HeartHands />}
        </div>
      )}
    </div>
  );

  return (
    <li className={`flex flex-col ${m.mine ? 'items-end' : 'items-start'} ${m.first ? 'mt-[30px]' : 'mt-2.5'} ${m.reacted ? 'pb-[50px]' : ''}`}>
      <div className={`relative rounded-[26px] ${m.mine ? 'bg-[#004d37]' : 'bg-[#242626]'} ${lead.length ? 'w-[76%]' : ''}`}>
        {m.tail && <Tail mine={m.mine} />}

        {m.quote && (
          <div className="px-[7px] pt-2">
            <blockquote className="flex overflow-hidden rounded-2xl bg-[#1e1e1e]">
              <div className="w-[9px] bg-[#c5a583]" />
              <div className="pt-5 pb-5 pl-[21px] pr-4">
                <p className="text-[32px] leading-[47px] font-semibold text-[#c5a987]">You</p>
                <p className="text-[29px] leading-[47px] text-[#cdcdcd] whitespace-nowrap">{m.quote}</p>
              </div>
            </blockquote>
          </div>
        )}

        <div className="pt-[11px] pb-2.5 pl-[22px] pr-[21px]">
          {lead.map(l => <p key={l} className="text-4xl leading-[49px] whitespace-nowrap">{l}</p>)}
          {m.stacked ? (
            <div className="flex flex-col items-end gap-3">
              {body}
              {time}
            </div>
          ) : (
            <div className="flex items-end justify-between gap-8">
              <div className="pb-1.5">{body}</div>
              {time}
            </div>
          )}
        </div>

        {m.reacted && (
          <button
            aria-label="Reactions: ❤️"
            className={`absolute -bottom-[50px] flex h-[55px] w-[76px] items-center justify-center rounded-full bg-[#242626] ring-2 ring-[#0a0a0a] ${m.mine ? 'right-[23px]' : 'left-[23px]'}`}
          >
            <Heart className="size-[37px]" />
          </button>
        )}
      </div>
    </li>
  );
}

function Composer() {
  return (
    <footer className="bg-[#111111] pt-[17px] pb-[19px]">
      <form className="flex items-center pl-[30px] pr-[38px]" onSubmit={e => e.preventDefault()}>
        <button type="button" aria-label="Attach" className="shrink-0">
          <svg viewBox="0 0 46 46" className="size-[46px]" fill="none" stroke="white" strokeWidth="4.500" strokeLinecap="round">
            <path d="M22.500 2.500 V43 M2.500 22.500 H43" />
          </svg>
        </button>

        <div className="ml-[30px] flex h-[68px] min-w-0 flex-1 items-center rounded-full border border-[#363636] bg-[#292929] pl-7 pr-[25px]">
          <input type="text" aria-label="Message" className="min-w-0 flex-1 bg-transparent text-4xl text-white outline-none" />
          <button type="button" aria-label="Stickers" className="shrink-0">
            <svg viewBox="0 0 42 42" className="size-[42px]" fill="none" stroke="white" strokeWidth="2.800" strokeLinecap="round" strokeLinejoin="round">
              <path d="M17 1.500 H25 C35 1.500 40.500 7 40.500 17 V22 C40.500 25 39.500 27 37.500 29 L30 36.500 C26.500 39.500 23.500 40.500 20 40.500 H17 C7 40.500 1.500 35 1.500 25 V17 C1.500 7 7 1.500 17 1.500 Z" />
              <path d="M40.300 23 C33 23 31.500 23.300 29.500 24 C26.500 25 24.500 27 23.800 30 C23.300 32 23 35 22.800 40" />
            </svg>
          </button>
        </div>

        <button type="button" aria-label="Camera" className="ml-[42px] shrink-0">
          <svg viewBox="0 0 52 42" className="h-[42px] w-[52px]" fill="none" stroke="white" strokeWidth="3.200" strokeLinejoin="round">
            <path d="M5.500 7.500 H13 C14 7.500 14.500 7.200 15.200 6.300 L17.800 3 C18.500 2 19 1.800 20 1.800 H32 C33 1.800 33.500 2 34.200 3 L36.800 6.300 C37.500 7.200 38 7.500 39 7.500 H46.500 C49.200 7.500 50.300 8.600 50.300 11.300 V36.300 C50.300 39 49.200 40 46.500 40 H5.500 C2.800 40 1.700 39 1.700 36.300 V11.300 C1.700 8.600 2.800 7.500 5.500 7.500 Z" />
            <circle cx="26" cy="23" r="10.300" />
            <circle cx="41" cy="15" r="2.700" fill="white" stroke="none" />
          </svg>
        </button>

        <button type="button" aria-label="Record voice message" className="ml-11 shrink-0">
          <svg viewBox="0 0 36 52" className="h-[52px] w-9" fill="none" stroke="white" strokeWidth="3.600" strokeLinecap="round">
            <rect x="9" y="2" width="18" height="34" rx="9" />
            <path d="M2 27 C2 37 9 43.500 18 43.500 C27 43.500 34 37 34 27 M18 44 V50" />
          </svg>
        </button>
      </form>

      <div className="mx-auto mt-[62px] h-[11px] w-[36%] rounded-full bg-white" />
    </footer>
  );
}

export default function App() {
  return (
    <div className="flex min-h-screen flex-col bg-[#111111] font-['Inter','Liberation_Sans',sans-serif] text-white">
      <main className="relative flex-1 overflow-hidden bg-[#0a0a0a]">
        <Wallpaper />
        <ul className="relative px-[38px] pt-2.5 pb-[18px]">
          {messages.map(m => <Bubble key={m.id} m={m} />)}
        </ul>
        <div className="absolute right-[7px] bottom-[6px] h-[574px] w-[7px] rounded-full bg-[#7f7f7f]" />
      </main>
      <Composer />
    </div>
  );
}
